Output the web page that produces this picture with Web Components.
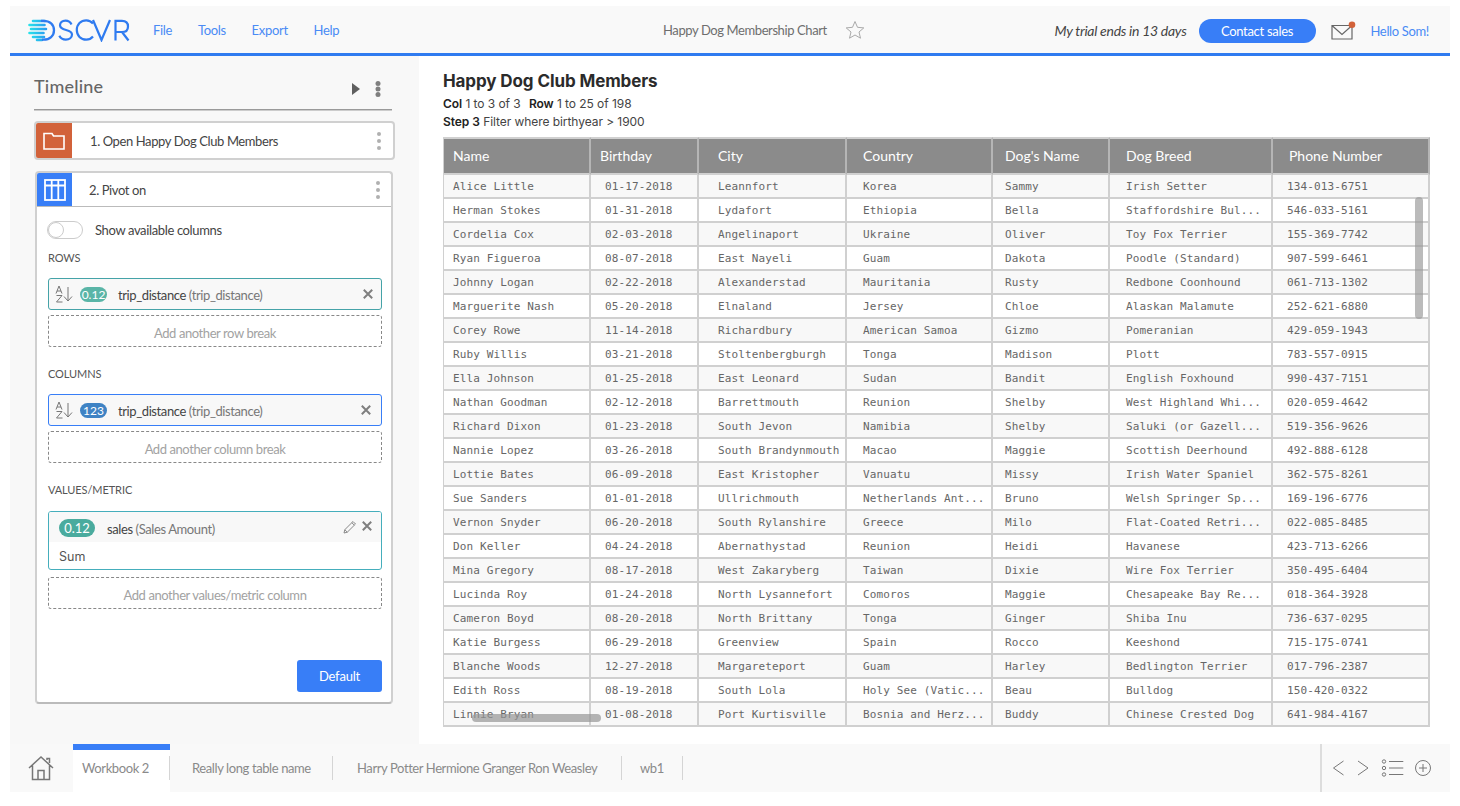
<!DOCTYPE html>
<html lang="en"><head><meta charset="utf-8"><title>DSCVR</title>
<style>
html,body{margin:0;padding:0;background:#fff;height:100%;overflow:hidden}
body{font-family:Lato,"Liberation Sans",sans-serif;color:#4a4a4a}
</style></head><body>
<dscvr-app>
  <top-bar slot="top"></top-bar>
  <time-line slot="side"></time-line>
  <data-view slot="main"></data-view>
  <tab-bar slot="bottom"></tab-bar>
</dscvr-app>
<script>
const def=(name,html,init)=>{
  customElements.define(name,class extends HTMLElement{
    connectedCallback(){
      if(this.shadowRoot)return;
      const r=this.attachShadow({mode:'open'});
      r.innerHTML=typeof html==='function'?html(this):html;
      if(init)init(r,this);
    }
  });
};
const FONT='Lato,"Liberation Sans",sans-serif';
const X=`<svg width="12" height="12" viewBox="0 0 12 12"><path d="M1.800 1.800l8.400 8.400M10.200 1.800l-8.400 8.400" stroke="#7f7f7f" stroke-width="2" fill="none"/></svg>`;
const SORT=`<svg width="19" height="18" viewBox="0 0 19 18" fill="none" stroke="#777" stroke-width="1"><path d="M1 8.500L4 1l3 7.500M2 6h4M1.500 10.500H7L1.500 17H7.500"/><path d="M13 2v14M9 11.500l4 4.500 4-4.500"/></svg>`;
const DOTS=(c='#aaa',r=2,g=7)=>`<svg width="8" height="${g*2+r*2+2}" viewBox="0 0 8 ${g*2+r*2+2}" fill="${c}"><circle cx="4" cy="${r+1}" r="${r}"/><circle cx="4" cy="${r+1+g}" r="${r}"/><circle cx="4" cy="${r+1+2*g}" r="${r}"/></svg>`;

def('dscvr-app',`<style>
:host{display:flex;flex-direction:column;width:1440px;height:786px;margin:6px 10px 0;box-sizing:border-box}
.mid{display:flex;height:688px}
.side{width:409px;background:#f8f8f8;flex:none;box-sizing:border-box}
.main{flex:1;min-width:0;background:#fff}
</style>
<slot name="top"></slot>
<div class="mid"><div class="side"><slot name="side"></slot></div><div class="main"><slot name="main"></slot></div></div>
<slot name="bottom"></slot>`);

def('top-bar',`<style>
:host{display:flex;align-items:center;height:47px;background:#f9f9f9;border-bottom:3px solid #2f7bf0;font-size:13px;font-family:${FONT};position:relative;letter-spacing:-.3px}
.logo{margin-left:18px;display:block;height:24px;flex:none}
nav{display:flex;margin-left:21px}
nav a{color:#4a8bf5;margin-right:25.700px;font-size:13px}
.title{position:absolute;left:653px;top:16px;color:#6e6e6e;font-size:13px;line-height:16px;letter-spacing:-.4px}
.star{position:absolute;left:835px;top:14px}
.right{margin-left:auto;display:flex;align-items:center;padding-top:2px}
.trial{font-style:italic;color:#444;font-size:14px;margin-right:12px;letter-spacing:-.28px}
.btn{background:#387ef7;color:#fff;border-radius:12px;width:117px;height:24px;display:flex;align-items:center;justify-content:center;font-size:13px;margin-right:16px}
.mail{position:relative;width:24px;height:20px;margin-right:15px}
.hello{color:#4a8bf5;margin-right:21px;font-size:13px;letter-spacing:-.35px}
</style>
<svg class="logo" width="104" height="24" viewBox="0 0 104 24">
 <defs><linearGradient id="lg" x1="0" x2="1" y1="0" y2="0"><stop offset="0" stop-color="#27e0ea"/><stop offset="1" stop-color="#2a9cf0"/></linearGradient></defs>
 <g stroke="url(#lg)" stroke-width="2.600" stroke-linecap="round"><path d="M5 3.010h12M1.500 7.010h15M3 11.010h15M1.500 15.010h14M5 19.010h11M9 22.010h5"/></g>
 <path d="M13 2.800h2.500c6.300 0 10.500 3.700 10.500 9.400s-4.200 9.400-10.500 9.400H14" fill="none" stroke="#2f7bf0" stroke-width="2.300"/>
 <path d="M43.500 6.500c-1-2.300-3.200-3.900-6-3.900-3.200 0-5.500 1.800-5.500 4.700 0 6.400 12 3.100 12 9.300 0 3-2.600 5-6.200 5-3 0-5.200-1.400-6.500-3.900" fill="none" stroke="#2f7bf0" stroke-width="2.200"/>
 <path d="M65 5.500c-1.700-2-4-3.200-6.700-3.200-5.500 0-9.500 4.200-9.500 9.700s4 9.700 9.500 9.700c2.700 0 5-1.200 6.700-3.200" fill="none" stroke="#2f7bf0" stroke-width="2.200"/>
 <path d="M65 2l8.500 20L82 2" fill="none" stroke="#2f7bf0" stroke-width="2.200"/>
 <path d="M87.500 22.500V2.800h6.500c3.800 0 6 2.300 6 5.600s-2.200 5.600-6 5.600h-6.500M94 14l6.500 8.500" fill="none" stroke="#2f7bf0" stroke-width="2.200"/>
</svg>
<nav><a>File</a><a>Tools</a><a>Export</a><a>Help</a></nav>
<div class="title">Happy Dog Membership Chart</div>
<svg class="star" width="20" height="20" viewBox="0 0 20 20"><path d="M10 1.500l2.500 5.800 6.300.6-4.800 4.100 1.500 6.200L10 15l-5.500 3.200L6 12 1.200 7.900l6.300-.6z" fill="none" stroke="#aaa" stroke-width="1"/></svg>
<div class="right"><span class="trial">My trial ends in 13 days</span><span class="btn">Contact sales</span>
<span class="mail"><svg width="26" height="22" viewBox="0 0 26 22" style="position:absolute;left:-1px;top:0"><path d="M1 4.500h20v13.500H1zM1 4.500l10 9 10-9" fill="none" stroke="#666" stroke-width="1.200"/><circle cx="21" cy="3.700" r="3.300" fill="#d2623a"/></svg></span>
<span class="hello">Hello Som!</span></div>`);

def('step-card',(h)=>`<style>
:host{display:block;background:#fff;border:2px solid #d0d0d0;border-radius:4px;box-sizing:border-box;overflow:hidden;font-family:${FONT};font-size:13px;color:#444}
.head{display:flex;align-items:center;height:${h.getAttribute('hh')||35}px}
.ico{width:${h.getAttribute('iw')||36}px;align-self:stretch;display:flex;align-items:center;justify-content:center;background:${h.getAttribute('color')};flex:none}
.lbl{flex:1;padding-left:${h.getAttribute('pad')||18}px;letter-spacing:-.4px}
.dots{margin-right:${h.getAttribute('dr')||10}px;display:flex}
.body{display:block}
:host([open]) .head{border-bottom:1px solid #bbb}
:host([open]){border-bottom-color:#bbb}
</style>
<div class="head"><div class="ico"><slot name="icon"></slot></div><div class="lbl"><slot name="label"></slot></div><div class="dots">${DOTS('#b0b0b0',2,7)}</div></div>
<div class="body"><slot></slot></div>`);

def('toggle-switch',`<style>
:host{display:flex;align-items:center;font-size:13px;color:#444;font-family:${FONT};letter-spacing:-.36px}
.t{width:36px;height:18px;border:1px solid #ccc;border-radius:9px;box-sizing:border-box;position:relative;margin-right:12px;margin-left:-1px;background:#fff}
.k{position:absolute;left:0;top:0;width:16px;height:16px;border-radius:50%;border:1px solid #ccc;box-sizing:border-box;background:#fff}
</style><span class="t"><span class="k"></span></span><slot></slot>`);

def('section-label',`<style>:host{display:block;font-size:11px;color:#555;font-family:${FONT};line-height:14px;letter-spacing:-.1px}</style><slot></slot>`);

def('field-pill',(h)=>{
  const c=h.getAttribute('color'),bd=h.getAttribute('bd');
  return `<style>
:host{display:flex;align-items:center;height:32px;border:1px solid ${bd};border-radius:3px;background:#f8f8f8;box-sizing:border-box;font-family:${FONT};font-size:13px;position:relative}
.s{margin-left:6px;display:flex}
.b{width:27px;height:15px;border-radius:8px;background:${c};color:#fff;font-size:12px;line-height:15px;text-align:center;margin-left:6px;margin-right:11px}
.n{color:#444;letter-spacing:-.4px;padding-top:2px}
.x{position:absolute;right:${h.getAttribute('xr')||7}px;top:9px;display:flex}
::slotted(i){font-style:normal;color:#777}
</style><span class="s">${SORT}</span><span class="b">${h.getAttribute('badge')}</span><span class="n"><slot></slot></span><span class="x">${X}</span>`;
});

def('add-box',`<style>:host{display:flex;align-items:center;justify-content:center;height:32px;padding-top:3px;border:1px dashed #888;border-radius:3px;box-sizing:border-box;color:#a2a2a2;font-size:13px;font-family:${FONT};letter-spacing:-.42px}</style><slot></slot>`);

def('metric-card',`<style>
:host{display:block;border:1px solid #45aebc;border-radius:3px;height:59px;box-sizing:border-box;font-family:${FONT};font-size:13px;overflow:hidden}
.h{display:flex;align-items:center;height:30px;background:#f8f8f8;position:relative;padding-top:1px;box-sizing:border-box}
.b{width:36px;height:18px;border-radius:9px;background:#4aab9e;color:#fff;text-align:center;line-height:18px;font-size:13px;margin-left:10px;margin-right:12px}
.n{color:#444;letter-spacing:-.4px;padding-top:2px}
.p{position:absolute;right:24px;top:8px;display:flex}.x{position:absolute;right:8px;top:8px;display:flex}
.sum{padding:1px 0 0 10px;font-size:12.500px;line-height:28px;color:#555;font-family:Inter,Lato,sans-serif}
::slotted(i){font-style:normal;color:#888}
</style><div class="h"><span class="b">0.12</span><span class="n"><slot></slot></span>
<span class="p"><svg width="14" height="14" viewBox="0 0 14 14" fill="none" stroke="#888"><path d="M1 13l.8-3.300L10 1.500l2.500 2.500-8.200 8.200zM8.800 2.700l2.500 2.500M1.800 9.700l2.500 2.500"/></svg></span><span class="x">${X}</span></div>
<div class="sum">Sum</div>`);

def('time-line',`<style>
:host{display:block;font-family:${FONT};padding:0 24px 0 24px;position:relative}
.top{display:flex;align-items:center;height:54px;border-bottom:1px solid #9a9a9a;margin-right:3px;box-sizing:border-box;color:#666;font-size:18px;font-weight:500;letter-spacing:.2px;padding-top:7px;position:relative;box-shadow:0 1px 0 #ccc}
.play{position:absolute;left:317px;top:27px}.m{position:absolute;left:340px;top:24px;display:flex}
step-card{width:361px}
.s1{margin-top:11px;height:39px}
.s2{margin-top:11px;margin-left:1px;width:358px;height:533px}
.wrap{padding:0 9px 0 11px;display:flex;flex-direction:column}
toggle-switch{margin-top:14px;height:18px}
.l1{margin-top:12px}.fp{margin-top:13px}.ab{margin-top:5px}
.l2{margin-top:20px}.l3{margin-top:20px}
.mc{margin-top:14px}
.ab3{margin-top:7px}
.btnrow{display:flex;justify-content:flex-end;margin-top:51px}
.btn{width:85px;height:32px;background:#387ef7;border-radius:3px;color:#fff;font-size:13px;letter-spacing:-.2px;display:flex;align-items:center;justify-content:center}
i{font-style:normal;color:#777}
</style>
<div class="top">Timeline
<svg class="play" width="10" height="12" viewBox="0 0 10 12"><path d="M1 0l8 6-8 6z" fill="#5f5f5f"/></svg>
<span class="m">${DOTS('#7f7f7f',2.5,5.5)}</span></div>
<step-card class="s1" color="#d2623a" iw="36" hh="35" pad="18">
  <svg slot="icon" width="22" height="18" viewBox="0 0 22 18" fill="none" stroke="#fff" stroke-width="1.600"><path d="M1 1.500h8l1.500 2.500H21v13H1z"/></svg>
  <span slot="label">1. Open Happy Dog Club Members</span>
</step-card>
<step-card class="s2" open color="#387ef7" iw="35" hh="33" pad="17" dr="9">
  <svg slot="icon" width="22" height="22" viewBox="0 0 22 22" fill="none" stroke="#fff" stroke-width="1.800"><rect x="1" y="1" width="20" height="20"/><path d="M1 6.500h20" stroke-width="2"/><path d="M7.700 1v20M14.300 1v20"/></svg>
  <span slot="label">2. Pivot on</span>
  <div class="wrap">
    <toggle-switch>Show available columns</toggle-switch>
    <section-label class="l1">ROWS</section-label>
    <field-pill class="fp" color="#5ab5a7" bd="#45a3a8" badge="0.12">trip_distance <i>(trip_distance)</i></field-pill>
    <add-box class="ab">Add another row break</add-box>
    <section-label class="l2">COLUMNS</section-label>
    <field-pill class="fp" color="#3f83c4" bd="#387ef7" badge="123" xr="9">trip_distance <i>(trip_distance)</i></field-pill>
    <add-box class="ab">Add another column break</add-box>
    <section-label class="l3">VALUES/METRIC</section-label>
    <metric-card class="mc">sales <i>(Sales Amount)</i></metric-card>
    <add-box class="ab3">Add another values/metric column</add-box>
    <div class="btnrow"><span class="btn">Default</span></div>
  </div>
</step-card>`);

const ROWS=`Alice Little|01-17-2018|Leannfort|Korea|Sammy|Irish Setter|134-013-6751
Herman Stokes|01-31-2018|Lydafort|Ethiopia|Bella|Staffordshire Bul...|546-033-5161
Cordelia Cox|02-03-2018|Angelinaport|Ukraine|Oliver|Toy Fox Terrier|155-369-7742
Ryan Figueroa|08-07-2018|East Nayeli|Guam|Dakota|Poodle (Standard)|907-599-6461
Johnny Logan|02-22-2018|Alexanderstad|Mauritania|Rusty|Redbone Coonhound|061-713-1302
Marguerite Nash|05-20-2018|Elnaland|Jersey|Chloe|Alaskan Malamute|252-621-6880
Corey Rowe|11-14-2018|Richardbury|American Samoa|Gizmo|Pomeranian|429-059-1943
Ruby Willis|03-21-2018|Stoltenbergburgh|Tonga|Madison|Plott|783-557-0915
Ella Johnson|01-25-2018|East Leonard|Sudan|Bandit|English Foxhound|990-437-7151
Nathan Goodman|02-12-2018|Barrettmouth|Reunion|Shelby|West Highland Whi...|020-059-4642
Richard Dixon|01-23-2018|South Jevon|Namibia|Shelby|Saluki (or Gazell...|519-356-9626
Nannie Lopez|03-26-2018|South Brandynmouth|Macao|Maggie|Scottish Deerhound|492-888-6128
Lottie Bates|06-09-2018|East Kristopher|Vanuatu|Missy|Irish Water Spaniel|362-575-8261
Sue Sanders|01-01-2018|Ullrichmouth|Netherlands Ant...|Bruno|Welsh Springer Sp...|169-196-6776
Vernon Snyder|06-20-2018|South Rylanshire|Greece|Milo|Flat-Coated Retri...|022-085-8485
Don Keller|04-24-2018|Abernathystad|Reunion|Heidi|Havanese|423-713-6266
Mina Gregory|08-17-2018|West Zakaryberg|Taiwan|Dixie|Wire Fox Terrier|350-495-6404
Lucinda Roy|01-24-2018|North Lysannefort|Comoros|Maggie|Chesapeake Bay Re...|018-364-3928
Cameron Boyd|08-20-2018|North Brittany|Tonga|Ginger|Shiba Inu|736-637-0295
Katie Burgess|06-29-2018|Greenview|Spain|Rocco|Keeshond|715-175-0741
Blanche Woods|12-27-2018|Margareteport|Guam|Harley|Bedlington Terrier|017-796-2387
Edith Ross|08-19-2018|South Lola|Holy See (Vatic...|Beau|Bulldog|150-420-0322
Linnie Bryan|01-08-2018|Port Kurtisville|Bosnia and Herz...|Buddy|Chinese Crested Dog|641-984-4167`.split('\n').map(r=>r.split('|'));
const HEAD=['Name','Birthday','City','Country',"Dog's Name",'Dog Breed','Phone Number'];
const HP=[9,9,19,16,12,16,16],CP=[9,14,19,16,12,16,14];

def('data-grid',`<style>
:host{display:block;position:relative;width:986px;height:590px;font-size:12px}
.g{display:grid;grid-template-columns:147px 108px 148px 146px 117px 163px 157px;grid-template-rows:38px repeat(23,24px);border-left:1px solid #d0d0d0;box-sizing:border-box;width:986px}
.h{background:#8b8b8b;color:#fff;font-family:${FONT};font-size:14px;display:flex;align-items:center;border-right:2px solid #b5b5b5;box-sizing:border-box;border-top:2px solid #d0d0d0;border-bottom:2px solid #d0d0d0;padding-bottom:1px;white-space:nowrap}
.c{font-family:"DejaVu Sans Mono","Liberation Mono",monospace;font-size:11px;color:#666;display:flex;align-items:center;border-right:2px solid #d0d0d0;border-bottom:2px solid #d0d0d0;box-sizing:border-box;white-space:nowrap;overflow:hidden;letter-spacing:.13px}
.odd{background:#f8f8f8}
.sv{position:absolute;left:972px;top:60px;width:8px;height:122px;background:rgba(150,150,150,.65);border-radius:4px}
.sh{position:absolute;left:29px;top:577px;width:129px;height:8px;background:rgba(150,150,150,.7);border-radius:4px}
</style><div class="g"></div><div class="sv"></div><div class="sh"></div>`,(r)=>{
  const g=r.querySelector('.g');let s='';
  HEAD.forEach((t,i)=>s+=`<div class="h" style="padding-left:${HP[i]}px">${t}</div>`);
  ROWS.forEach((row,n)=>row.forEach((t,i)=>s+=`<div class="c${n%2==0?' odd':''}" style="padding-left:${CP[i]}px">${t}</div>`));
  g.innerHTML=s;
});

def('data-view',`<style>
:host{display:block;padding:15px 0 0 24px;font-family:Inter,Lato,sans-serif;color:#333}
h1{margin:0;font-size:17px;line-height:20px;font-weight:700;color:#2b2b2b;letter-spacing:-.1px}
.m{font-size:12px;line-height:18px;color:#444;letter-spacing:-.06px}
.m b{font-weight:600;color:#222}
.m span{margin-left:5px}
data-grid{margin-top:6px}
</style><h1>Happy Dog Club Members</h1>
<div class="m" style="margin-top:4px"><b>Col</b> 1 to 3 of 3 <span><b>Row</b> 1 to 25 of 198</span></div>
<div class="m"><b>Step 3</b> Filter where birthyear &gt; 1900</div>
<data-grid></data-grid>`);

def('tab-bar',`<style>
:host{display:flex;height:48px;background:#f9f9f9;font-family:${FONT};font-size:13px;color:#8a8a8a;position:relative}
.home{width:63px;flex:none;display:flex;align-items:center;padding-left:18px;box-sizing:border-box}
.tab{display:flex;align-items:center;position:relative;height:48px;box-sizing:border-box;letter-spacing:-.4px;white-space:nowrap;flex:none}
.tab::after{content:"";position:absolute;right:0;top:12px;height:24px;width:1px;background:#d5d5d5}
.on{background:#fff;border-top:6px solid #387ef7;width:97px;padding-left:9px}
.on span{position:relative;top:-3px}
.on::after{top:6px}
.t1{width:163px;padding-left:22px}.t2{width:289px;padding-left:24px}.t3{width:61px;padding-left:18px}
.ctl{position:absolute;right:0;top:0;height:48px;width:130px;border-left:2px solid #ddd;box-sizing:border-box}
.ctl svg{position:absolute;left:10px;top:15px}
</style>
<div class="home"><svg width="26" height="26" viewBox="0 0 26 26" fill="none" stroke="#777" stroke-width="1.500"><path d="M1 13L13 2l12 11M4.500 10.500V24.500H21.500V10.500M10 24.500V15.500H16V24.500M19 5V3.500h2.500V8"/></svg></div>
<div class="tab on"><span>Workbook 2</span></div>
<div class="tab t1">Really long table name</div>
<div class="tab t2">Harry Potter Hermione Granger Ron Weasley</div>
<div class="tab t3">wb1</div>
<div class="ctl"><svg width="112" height="18" viewBox="0 0 112 18" fill="none" stroke="#777" stroke-width="1"><path d="M11.500 2L1.500 9l10 7M26 2l10 7-10 7"/><circle cx="52" cy="2.500" r="1.700"/><circle cx="52" cy="9" r="1.700"/><circle cx="52" cy="15.500" r="1.700"/><path d="M57 2.500h14.300M57 9h14.300M57 15.500h14.300"/><circle cx="91" cy="9" r="7.500"/><path d="M91 5v8M87 9h8"/></svg></div>`);
</script>
</body></html>
